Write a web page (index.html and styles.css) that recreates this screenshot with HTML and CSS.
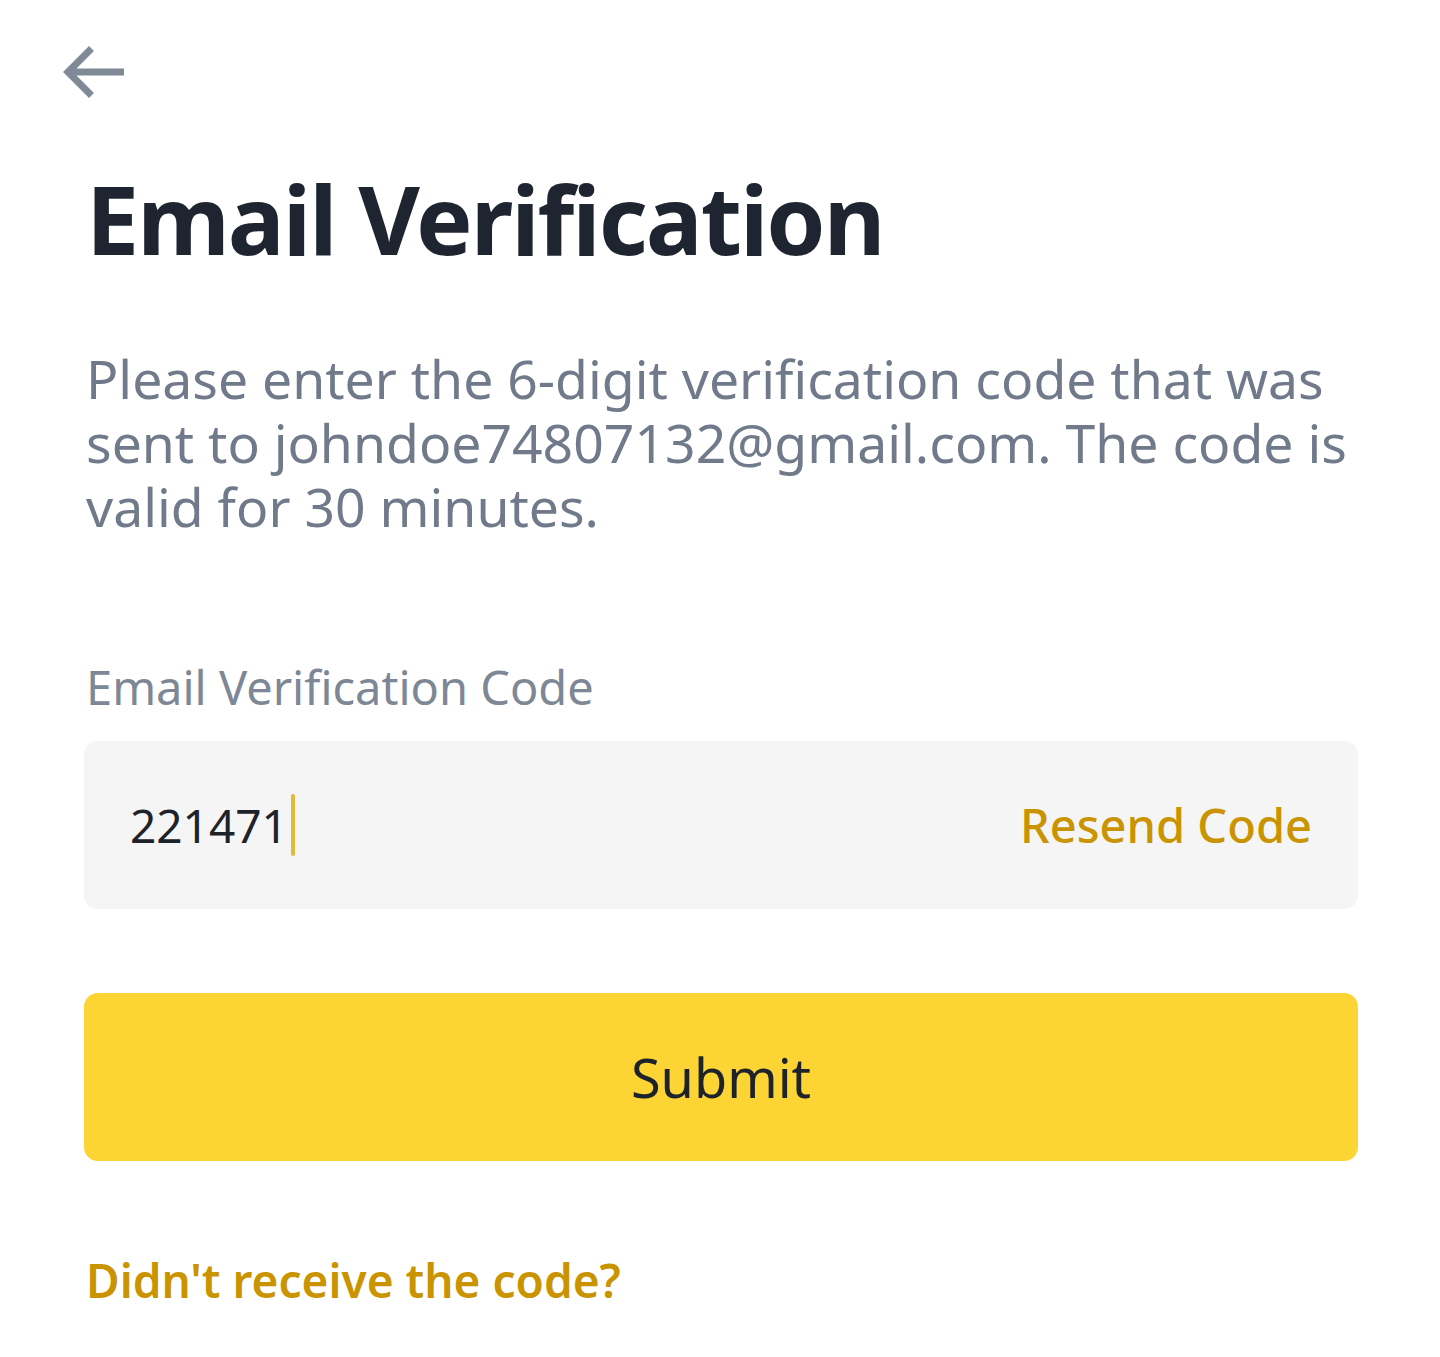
FILE: index.html
```html
<html>

<head>
    <meta charset="UTF-8" />
    <title>Email Verification</title>
    <link rel="stylesheet" href="styles.css">
</head>

<body>
    <div class="top">
        <a class="back" href="#">
            <svg width="66" height="52" viewBox="0 0 66 52">
                <path d="M28 5 L7 26 L28 47" fill="none" stroke="#808a97" stroke-width="7" stroke-linecap="square" />
                <path d="M9 26 H63" fill="none" stroke="#808a97" stroke-width="7" />
            </svg>
        </a>
    </div>
    <div class="page">
        <h1>Email Verification</h1>
        <p class="info">Please enter the 6-digit verification code that was sent to johndoe74807132@gmail.com. The code is valid for 30 minutes.</p>
        <div class="label">Email Verification Code</div>
        <div class="field">
            <span class="code">221471<span class="caret"></span></span>
            <a class="resend" href="#">Resend Code</a>
        </div>
        <button class="submit">Submit</button>
        <a class="help" href="#">Didn't receive the code?</a>
    </div>
</body>

</html>
```

FILE: styles.css
```css
body {
    margin: 0;
    background-color: #FFFFFF;
    font-family: 'Noto Sans', sans-serif;
    color: #1E2329;
}

a {
    text-decoration: none;
}

.top {
    padding: 46px 0 0 61px;
    height: 60px;
}

.back {
    display: block;
    width: 66px;
    height: 52px;
}

.page {
    padding: 0 82px 0 84px;
}

h1 {
    margin: 52px 0 0 2px;
    font-size: 95px;
    font-weight: 700;
    line-height: 120px;
    letter-spacing: -2px;
    color: #1E2530;
}

.info {
    margin: 69px 0 0 2px;
    font-size: 53.5px;
    line-height: 64px;
    color: #707A8A;
}

.label {
    margin: 118px 0 0 2px;
    font-size: 47px;
    line-height: 60px;
    color: #7D8795;
}

.field {
    margin-top: 24px;
    height: 168px;
    background-color: #F5F5F5;
    border-radius: 14px;
    display: flex;
    align-items: center;
    justify-content: space-between;
    padding: 0 46px 0 46px;
}

.code {
    font-size: 46px;
    letter-spacing: 0;
    color: #1E2329;
    display: flex;
    align-items: center;
}

.caret {
    display: inline-block;
    width: 4px;
    height: 62px;
    margin-left: 3px;
    background-color: #E2B93A;
    border-radius: 2px;
}

.resend {
    font-size: 47px;
    font-weight: 500;
    color: #C99400;
}

.submit {
    display: block;
    width: 100%;
    margin-top: 84px;
    height: 168px;
    border: none;
    border-radius: 14px;
    background-color: #FCD535;
    font-family: 'Noto Sans', sans-serif;
    font-size: 54px;
    color: #1E2329;
}

.help {
    display: block;
    margin: 88px 0 0 2px;
    font-size: 46px;
    font-weight: 600;
    color: #C99400;
}
```
